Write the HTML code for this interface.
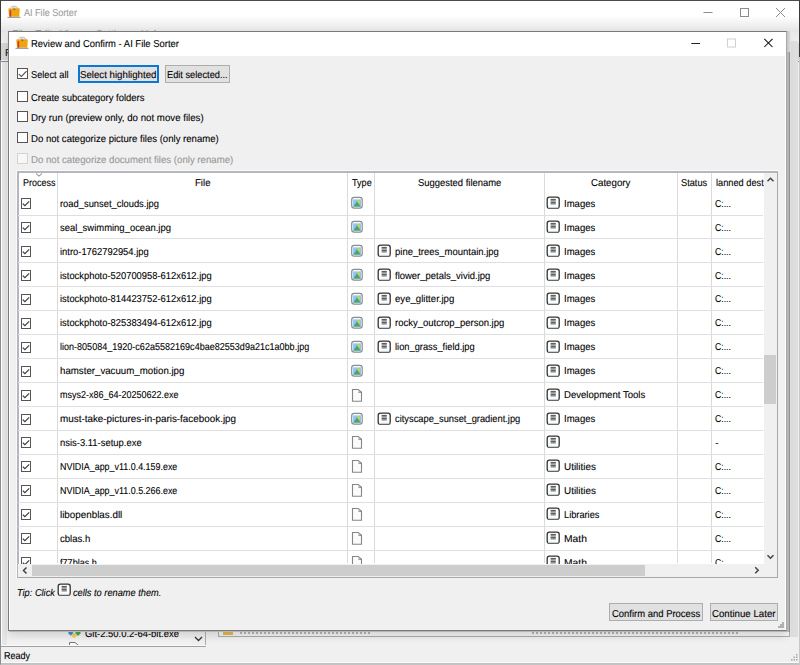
<!DOCTYPE html><html><head><meta charset="utf-8"><style>
*{box-sizing:border-box;margin:0;padding:0}
html,body{width:800px;height:665px;overflow:hidden;background:#f0f0f0}
body{position:relative;font-family:'Liberation Sans',sans-serif;font-size:10px;text-rendering:geometricPrecision;color:#000}
.a{position:absolute}
.t{position:absolute;white-space:nowrap;line-height:12px;transform-origin:0 0;-webkit-text-stroke-width:0.1px}
</style></head><body>
<div class="a" style="left:0;top:0;width:800px;height:665px;background:#f0f0f0"></div>
<div class="a" style="left:1px;top:1px;width:798px;height:30px;background:#fff"></div>
<div class="a" style="left:1px;top:16px;width:798px;height:16px;background:linear-gradient(#fff,#e4e4e4)"></div>
<div class="a" style="left:1px;top:32px;width:798px;height:11px;background:linear-gradient(#e8e8e8,#f0f0f0)"></div>
<div class="a" style="left:1px;top:43px;width:798px;height:17px;background:#d6d6d6"></div>
<div class="a" style="left:1px;top:60px;width:798px;height:1px;background:#f4f4f4"></div>
<div class="a" style="left:1px;top:61px;width:798px;height:1px;background:#8a8a8a"></div>
<div class="t" style="left:5px;top:48px;color:#111">F</div>
<div class="t" style="left:12px;top:29px;color:#9a9a9a">File</div>
<div class="t" style="left:35px;top:29px;color:#9a9a9a">Edit</div>
<div class="t" style="left:60px;top:29px;color:#9a9a9a">View</div>
<div class="t" style="left:96px;top:29px;color:#9a9a9a">Settings</div>
<div class="t" style="left:141px;top:29px;color:#9a9a9a">Help</div>
<div class="a" style="left:1px;top:62px;width:205px;height:585px;background:linear-gradient(90deg,#fff 0 1px,#e6e6e6 1px 6px,#f2f2f2 6px);border-right:1px solid #adadad"></div>
<div class="a" style="left:192px;top:631px;width:13px;height:15px;background:#f0f0f0"></div>
<svg class="a" style="left:194px;top:636px" width="9" height="6"><path d="M1 1 L4.5 4.5 L8 1" fill="none" stroke="#333" stroke-width="1.3"/></svg>
<svg class="a" style="left:67px;top:628px" width="16" height="12"><path d="M1 5 L3.75 2.25 L6.5 5 L3.75 7.75 Z" fill="#4a8ad8"/><path d="M8 5 L11 2 L14 5 L11 8 Z" fill="#4aa848"/><path d="M4 7.5 L7 4.5 L10 7.5 L7 10.5 Z" fill="#f2d268"/></svg>
<svg class="a" style="left:68px;top:641px" width="12" height="6"><path d="M1.5 6 V1.5 H7 L10.5 4.5 V6" fill="#fafafa" stroke="#777" stroke-width="1"/></svg>
<div class="a" style="left:1px;top:645px;width:205px;height:1px;background:#fafafa"></div>
<div class="a" style="left:1px;top:646px;width:205px;height:1px;background:#a0a0a0"></div>
<div class="a" style="left:218px;top:62px;width:572px;height:575px;background:#fff;border:1px solid #adadad"></div>
<div class="a" style="left:219px;top:630px;width:570px;height:6px;background:#f4f4f4"></div>
<div class="a" style="left:223px;top:631px;width:10px;height:4px;background:#e8b84a"></div>
<div class="a" style="left:240px;top:631px;width:132px;height:3px;background:repeating-linear-gradient(90deg,#b4b4b4 0 2px,transparent 2px 4px)"></div>
<div class="a" style="left:532px;top:631px;width:206px;height:3px;background:repeating-linear-gradient(90deg,#b4b4b4 0 2px,transparent 2px 4px)"></div>
<div class="a" style="left:790px;top:41px;width:8px;height:596px;background:#dedede;border-left:1px solid #e8e8e8"></div>
<div class="a" style="left:1px;top:647px;width:798px;height:17px;background:#f0f0f0"></div>
<svg class="a" style="left:790px;top:653px" width="9" height="9"><g fill="#a8a8a8"><rect x="6" y="1" width="1.5" height="1.5"/><rect x="3.5" y="3.5" width="1.5" height="1.5"/><rect x="6" y="3.5" width="1.5" height="1.5"/><rect x="1" y="6" width="1.5" height="1.5"/><rect x="3.5" y="6" width="1.5" height="1.5"/><rect x="6" y="6" width="1.5" height="1.5"/></g></svg>
<div class="a" style="left:1px;top:662px;width:798px;height:1px;background:#fafafa"></div>
<div class="a" style="left:1px;top:663px;width:798px;height:2px;background:#c2c2c2"></div>
<div class="a" style="left:0;top:0;width:800px;height:665px;border:1px solid #8a8e94;border-top-color:#4a4a4a;border-bottom-color:#c4c4c4;border-right-color:#c8c8c8"></div>
<div class="a" style="left:0;top:0;width:1px;height:60px;background:#3a3a3a"></div>
<div class="a" style="left:799px;top:0;width:1px;height:57px;background:#3a3a3a"></div>
<svg class="a" style="left:7px;top:5px" width="14" height="14" viewBox="0 0 14 14"><path d="M2.5 4.5 L5 1.2 L9.5 1.8 L11 4.5 Z" fill="#f2f2f2" stroke="#a8a8a8" stroke-width=".7"/><path d="M5.5 3.5 L8.5 0.8 L11.5 3.8 Z" fill="#e6e6e6" stroke="#b0b0b0" stroke-width=".6"/><path d="M1.3 3.6 H12.8 L12.3 11.8 H2 Z" fill="#f0a410"/><path d="M6.5 3.6 H8.2 V5 H6.5 Z" fill="#8a6a20"/><rect x="2.6" y="5.2" width="1.6" height="6.6" fill="#c8363a"/><rect x="0.5" y="11.8" width="13" height="1.2" fill="#a0a4aa"/></svg>
<svg class="a" style="left:700px;top:5px" width="90" height="16"><path d="M3.5 7.5 H12.5" stroke="#8c8c8c" stroke-width="1"/><rect x="40.5" y="3.5" width="8" height="8" fill="none" stroke="#8c8c8c"/><path d="M76 3 L85 12 M85 3 L76 12" stroke="#8c8c8c" stroke-width="1"/></svg>
<div class="t" style="left:24.20px;top:8px;transform:scaleX(0.9065);color:#9c9c9c">AI File Sorter</div>
<div class="t" style="left:4.30px;top:651px;transform:scaleX(0.9029);">Ready</div>
<div class="t" style="left:85.40px;top:629px;transform:scaleX(0.9437);">Git-2.50.0.2-64-bit.exe</div>
<div class="a" style="left:8px;top:31px;width:779px;height:600px;border:1px solid #7a7a7a;border-right-color:#a8a8a8;background:#f0f0f0;box-shadow:1px 1px 0 #b5b5b5,2px 1px 0 #b5b5b5,3px 1px 0 #909090,0 5px 8px rgba(0,0,0,.13)"></div>
<div class="a" style="left:9px;top:56px;width:1px;height:574px;background:#fff"></div>
<div class="a" style="left:785px;top:56px;width:1px;height:574px;background:#fff"></div>
<div class="a" style="left:787px;top:31px;width:3px;height:21px;background:linear-gradient(90deg,#c4c4c4,#d8d8d8)"></div>
<div class="a" style="left:9px;top:32px;width:777px;height:24px;background:#fff"></div>
<svg class="a" style="left:15px;top:36px" width="14" height="14" viewBox="0 0 14 14"><path d="M2.5 4.5 L5 1.2 L9.5 1.8 L11 4.5 Z" fill="#f2f2f2" stroke="#a8a8a8" stroke-width=".7"/><path d="M5.5 3.5 L8.5 0.8 L11.5 3.8 Z" fill="#e6e6e6" stroke="#b0b0b0" stroke-width=".6"/><path d="M1.3 3.6 H12.8 L12.3 11.8 H2 Z" fill="#f0a410"/><path d="M6.5 3.6 H8.2 V5 H6.5 Z" fill="#8a6a20"/><rect x="2.6" y="5.2" width="1.6" height="6.6" fill="#c8363a"/><rect x="0.5" y="11.8" width="13" height="1.2" fill="#a0a4aa"/></svg>
<svg class="a" style="left:688px;top:36px" width="92" height="16"><path d="M3.3 7.5 H12" stroke="#222" stroke-width="1"/><rect x="39.5" y="3" width="8" height="8" fill="none" stroke="#d0d0d0"/><path d="M76.3 2.8 L84.5 11 M84.5 2.8 L76.3 11" stroke="#111" stroke-width="1.05"/></svg>
<div class="a" style="left:17px;top:68px;width:11px;height:11px;border:1px solid #555;background:#fff"><svg style="position:absolute;left:0;top:0" width="9" height="9"><path d="M0.8 5.2 L3.4 7.5 L8.6 2.2" fill="none" stroke="#505050" stroke-width="1.1"/></svg></div>
<div class="a" style="left:78px;top:65px;width:81px;height:18px;border:2px solid #0a78d4;background:#e1e1e1"></div>
<div class="a" style="left:165px;top:65px;width:65px;height:18px;border:1px solid #adadad;background:#e1e1e1"></div>
<div class="a" style="left:17px;top:91px;width:11px;height:11px;border:1px solid #555;background:#fff"></div>
<div class="a" style="left:17px;top:111px;width:11px;height:11px;border:1px solid #555;background:#fff"></div>
<div class="a" style="left:17px;top:132px;width:11px;height:11px;border:1px solid #555;background:#fff"></div>
<div class="a" style="left:17px;top:153px;width:11px;height:11px;border:1px solid #d2d2d2;background:#f7f7f7"></div>
<div class="t" style="left:31.40px;top:39px;transform:scaleX(0.9437);">Review and Confirm - AI File Sorter</div>
<div class="t" style="left:31.40px;top:70px;transform:scaleX(0.9241);">Select all</div>
<div class="t" style="left:80.40px;top:70px;transform:scaleX(0.9677);">Select highlighted</div>
<div class="t" style="left:166.90px;top:70px;transform:scaleX(0.9246);">Edit selected...</div>
<div class="t" style="left:31.40px;top:93px;transform:scaleX(0.9452);">Create subcategory folders</div>
<div class="t" style="left:31.40px;top:113px;transform:scaleX(0.9690);">Dry run (preview only, do not move files)</div>
<div class="t" style="left:31.40px;top:134px;transform:scaleX(0.9567);">Do not categorize picture files (only rename)</div>
<div class="t" style="left:31.40px;top:155px;transform:scaleX(0.9624);color:#979797">Do not categorize document files (only rename)</div>
<div class="a" style="left:16px;top:170px;width:763px;height:409px;border:1px solid #fafafa;border-right:none;border-bottom:none"></div>
<div class="a" style="left:17px;top:171px;width:761px;height:407px;border:1px solid #a6a8ae;border-top:2px solid #b4b7be;border-left:2px solid #b4b7be;background:#fff"></div>
<div class="a" style="left:57px;top:173px;width:1px;height:390px;background:#dadada"></div>
<div class="a" style="left:347px;top:173px;width:1px;height:390px;background:#dadada"></div>
<div class="a" style="left:374px;top:173px;width:1px;height:390px;background:#dadada"></div>
<div class="a" style="left:544px;top:173px;width:1px;height:390px;background:#dadada"></div>
<div class="a" style="left:677px;top:173px;width:1px;height:390px;background:#dadada"></div>
<div class="a" style="left:711px;top:173px;width:1px;height:390px;background:#dadada"></div>
<svg class="a" style="left:35px;top:173px" width="8" height="4"><path d="M1 .5 L4 3.2 L7 .5" fill="none" stroke="#7a7a7a" stroke-width="1"/></svg>
<div class="a" style="left:18px;top:215px;width:745px;height:1px;background:#dfdfdf"></div>
<div class="a" style="left:21px;top:198px;width:10px;height:11px;border:1px solid #555;background:#fff"><svg style="position:absolute;left:-1px;top:-1px" width="10" height="11"><path d="M1.8 5.6 L3.9 7.7 L8.2 3.4" fill="none" stroke="#3a3a3a" stroke-width="1.15"/></svg></div>
<svg class="a" style="left:350px;top:196px" width="14" height="14" viewBox="0 0 14 14"><rect x="1.7" y="1.3" width="10.5" height="10.9" rx="2.4" fill="#fbfbfb" stroke="#8c8c8c" stroke-width="1.2"/><rect x="3.1" y="3.4" width="7.9" height="7.7" fill="#86c8f6"/><path d="M3.4 10.4 L7 5.3 L10.6 10.4 Z" fill="#4aa564"/><circle cx="8.9" cy="5.8" r="1.3" fill="#f7cc10"/></svg>
<svg class="a" style="left:546px;top:196px" width="14" height="14" viewBox="0 0 14 14"><rect x="1.2" y="1.2" width="12" height="11" rx="2.2" fill="#fff" stroke="#343434" stroke-width="1.3"/><path d="M2 11.2 H12.4" stroke="#d8ecf8" stroke-width="1"/><path d="M4.6 3.4 H9.8 M4.6 4.9 H9.8 M4.6 6.4 H9.8 M4.6 7.9 H9.8" stroke="#4a4a4a" stroke-width="1"/></svg>
<div class="a" style="left:18px;top:238px;width:745px;height:1px;background:#dfdfdf"></div>
<div class="a" style="left:21px;top:222px;width:10px;height:11px;border:1px solid #555;background:#fff"><svg style="position:absolute;left:-1px;top:-1px" width="10" height="11"><path d="M1.8 5.6 L3.9 7.7 L8.2 3.4" fill="none" stroke="#3a3a3a" stroke-width="1.15"/></svg></div>
<svg class="a" style="left:350px;top:220px" width="14" height="14" viewBox="0 0 14 14"><rect x="1.7" y="1.3" width="10.5" height="10.9" rx="2.4" fill="#fbfbfb" stroke="#8c8c8c" stroke-width="1.2"/><rect x="3.1" y="3.4" width="7.9" height="7.7" fill="#86c8f6"/><path d="M3.4 10.4 L7 5.3 L10.6 10.4 Z" fill="#4aa564"/><circle cx="8.9" cy="5.8" r="1.3" fill="#f7cc10"/></svg>
<svg class="a" style="left:546px;top:220px" width="14" height="14" viewBox="0 0 14 14"><rect x="1.2" y="1.2" width="12" height="11" rx="2.2" fill="#fff" stroke="#343434" stroke-width="1.3"/><path d="M2 11.2 H12.4" stroke="#d8ecf8" stroke-width="1"/><path d="M4.6 3.4 H9.8 M4.6 4.9 H9.8 M4.6 6.4 H9.8 M4.6 7.9 H9.8" stroke="#4a4a4a" stroke-width="1"/></svg>
<div class="a" style="left:18px;top:262px;width:745px;height:1px;background:#dfdfdf"></div>
<div class="a" style="left:21px;top:246px;width:10px;height:11px;border:1px solid #555;background:#fff"><svg style="position:absolute;left:-1px;top:-1px" width="10" height="11"><path d="M1.8 5.6 L3.9 7.7 L8.2 3.4" fill="none" stroke="#3a3a3a" stroke-width="1.15"/></svg></div>
<svg class="a" style="left:350px;top:244px" width="14" height="14" viewBox="0 0 14 14"><rect x="1.7" y="1.3" width="10.5" height="10.9" rx="2.4" fill="#fbfbfb" stroke="#8c8c8c" stroke-width="1.2"/><rect x="3.1" y="3.4" width="7.9" height="7.7" fill="#86c8f6"/><path d="M3.4 10.4 L7 5.3 L10.6 10.4 Z" fill="#4aa564"/><circle cx="8.9" cy="5.8" r="1.3" fill="#f7cc10"/></svg>
<svg class="a" style="left:377px;top:244px" width="14" height="14" viewBox="0 0 14 14"><rect x="1.2" y="1.2" width="12" height="11" rx="2.2" fill="#fff" stroke="#343434" stroke-width="1.3"/><path d="M2 11.2 H12.4" stroke="#d8ecf8" stroke-width="1"/><path d="M4.6 3.4 H9.8 M4.6 4.9 H9.8 M4.6 6.4 H9.8 M4.6 7.9 H9.8" stroke="#4a4a4a" stroke-width="1"/></svg>
<svg class="a" style="left:546px;top:244px" width="14" height="14" viewBox="0 0 14 14"><rect x="1.2" y="1.2" width="12" height="11" rx="2.2" fill="#fff" stroke="#343434" stroke-width="1.3"/><path d="M2 11.2 H12.4" stroke="#d8ecf8" stroke-width="1"/><path d="M4.6 3.4 H9.8 M4.6 4.9 H9.8 M4.6 6.4 H9.8 M4.6 7.9 H9.8" stroke="#4a4a4a" stroke-width="1"/></svg>
<div class="a" style="left:18px;top:286px;width:745px;height:1px;background:#dfdfdf"></div>
<div class="a" style="left:21px;top:270px;width:10px;height:11px;border:1px solid #555;background:#fff"><svg style="position:absolute;left:-1px;top:-1px" width="10" height="11"><path d="M1.8 5.6 L3.9 7.7 L8.2 3.4" fill="none" stroke="#3a3a3a" stroke-width="1.15"/></svg></div>
<svg class="a" style="left:350px;top:268px" width="14" height="14" viewBox="0 0 14 14"><rect x="1.7" y="1.3" width="10.5" height="10.9" rx="2.4" fill="#fbfbfb" stroke="#8c8c8c" stroke-width="1.2"/><rect x="3.1" y="3.4" width="7.9" height="7.7" fill="#86c8f6"/><path d="M3.4 10.4 L7 5.3 L10.6 10.4 Z" fill="#4aa564"/><circle cx="8.9" cy="5.8" r="1.3" fill="#f7cc10"/></svg>
<svg class="a" style="left:377px;top:268px" width="14" height="14" viewBox="0 0 14 14"><rect x="1.2" y="1.2" width="12" height="11" rx="2.2" fill="#fff" stroke="#343434" stroke-width="1.3"/><path d="M2 11.2 H12.4" stroke="#d8ecf8" stroke-width="1"/><path d="M4.6 3.4 H9.8 M4.6 4.9 H9.8 M4.6 6.4 H9.8 M4.6 7.9 H9.8" stroke="#4a4a4a" stroke-width="1"/></svg>
<svg class="a" style="left:546px;top:268px" width="14" height="14" viewBox="0 0 14 14"><rect x="1.2" y="1.2" width="12" height="11" rx="2.2" fill="#fff" stroke="#343434" stroke-width="1.3"/><path d="M2 11.2 H12.4" stroke="#d8ecf8" stroke-width="1"/><path d="M4.6 3.4 H9.8 M4.6 4.9 H9.8 M4.6 6.4 H9.8 M4.6 7.9 H9.8" stroke="#4a4a4a" stroke-width="1"/></svg>
<div class="a" style="left:18px;top:310px;width:745px;height:1px;background:#dfdfdf"></div>
<div class="a" style="left:21px;top:294px;width:10px;height:11px;border:1px solid #555;background:#fff"><svg style="position:absolute;left:-1px;top:-1px" width="10" height="11"><path d="M1.8 5.6 L3.9 7.7 L8.2 3.4" fill="none" stroke="#3a3a3a" stroke-width="1.15"/></svg></div>
<svg class="a" style="left:350px;top:292px" width="14" height="14" viewBox="0 0 14 14"><rect x="1.7" y="1.3" width="10.5" height="10.9" rx="2.4" fill="#fbfbfb" stroke="#8c8c8c" stroke-width="1.2"/><rect x="3.1" y="3.4" width="7.9" height="7.7" fill="#86c8f6"/><path d="M3.4 10.4 L7 5.3 L10.6 10.4 Z" fill="#4aa564"/><circle cx="8.9" cy="5.8" r="1.3" fill="#f7cc10"/></svg>
<svg class="a" style="left:377px;top:292px" width="14" height="14" viewBox="0 0 14 14"><rect x="1.2" y="1.2" width="12" height="11" rx="2.2" fill="#fff" stroke="#343434" stroke-width="1.3"/><path d="M2 11.2 H12.4" stroke="#d8ecf8" stroke-width="1"/><path d="M4.6 3.4 H9.8 M4.6 4.9 H9.8 M4.6 6.4 H9.8 M4.6 7.9 H9.8" stroke="#4a4a4a" stroke-width="1"/></svg>
<svg class="a" style="left:546px;top:292px" width="14" height="14" viewBox="0 0 14 14"><rect x="1.2" y="1.2" width="12" height="11" rx="2.2" fill="#fff" stroke="#343434" stroke-width="1.3"/><path d="M2 11.2 H12.4" stroke="#d8ecf8" stroke-width="1"/><path d="M4.6 3.4 H9.8 M4.6 4.9 H9.8 M4.6 6.4 H9.8 M4.6 7.9 H9.8" stroke="#4a4a4a" stroke-width="1"/></svg>
<div class="a" style="left:18px;top:334px;width:745px;height:1px;background:#dfdfdf"></div>
<div class="a" style="left:21px;top:318px;width:10px;height:11px;border:1px solid #555;background:#fff"><svg style="position:absolute;left:-1px;top:-1px" width="10" height="11"><path d="M1.8 5.6 L3.9 7.7 L8.2 3.4" fill="none" stroke="#3a3a3a" stroke-width="1.15"/></svg></div>
<svg class="a" style="left:350px;top:316px" width="14" height="14" viewBox="0 0 14 14"><rect x="1.7" y="1.3" width="10.5" height="10.9" rx="2.4" fill="#fbfbfb" stroke="#8c8c8c" stroke-width="1.2"/><rect x="3.1" y="3.4" width="7.9" height="7.7" fill="#86c8f6"/><path d="M3.4 10.4 L7 5.3 L10.6 10.4 Z" fill="#4aa564"/><circle cx="8.9" cy="5.8" r="1.3" fill="#f7cc10"/></svg>
<svg class="a" style="left:377px;top:316px" width="14" height="14" viewBox="0 0 14 14"><rect x="1.2" y="1.2" width="12" height="11" rx="2.2" fill="#fff" stroke="#343434" stroke-width="1.3"/><path d="M2 11.2 H12.4" stroke="#d8ecf8" stroke-width="1"/><path d="M4.6 3.4 H9.8 M4.6 4.9 H9.8 M4.6 6.4 H9.8 M4.6 7.9 H9.8" stroke="#4a4a4a" stroke-width="1"/></svg>
<svg class="a" style="left:546px;top:316px" width="14" height="14" viewBox="0 0 14 14"><rect x="1.2" y="1.2" width="12" height="11" rx="2.2" fill="#fff" stroke="#343434" stroke-width="1.3"/><path d="M2 11.2 H12.4" stroke="#d8ecf8" stroke-width="1"/><path d="M4.6 3.4 H9.8 M4.6 4.9 H9.8 M4.6 6.4 H9.8 M4.6 7.9 H9.8" stroke="#4a4a4a" stroke-width="1"/></svg>
<div class="a" style="left:18px;top:358px;width:745px;height:1px;background:#dfdfdf"></div>
<div class="a" style="left:21px;top:342px;width:10px;height:11px;border:1px solid #555;background:#fff"><svg style="position:absolute;left:-1px;top:-1px" width="10" height="11"><path d="M1.8 5.6 L3.9 7.7 L8.2 3.4" fill="none" stroke="#3a3a3a" stroke-width="1.15"/></svg></div>
<svg class="a" style="left:350px;top:340px" width="14" height="14" viewBox="0 0 14 14"><rect x="1.7" y="1.3" width="10.5" height="10.9" rx="2.4" fill="#fbfbfb" stroke="#8c8c8c" stroke-width="1.2"/><rect x="3.1" y="3.4" width="7.9" height="7.7" fill="#86c8f6"/><path d="M3.4 10.4 L7 5.3 L10.6 10.4 Z" fill="#4aa564"/><circle cx="8.9" cy="5.8" r="1.3" fill="#f7cc10"/></svg>
<svg class="a" style="left:377px;top:340px" width="14" height="14" viewBox="0 0 14 14"><rect x="1.2" y="1.2" width="12" height="11" rx="2.2" fill="#fff" stroke="#343434" stroke-width="1.3"/><path d="M2 11.2 H12.4" stroke="#d8ecf8" stroke-width="1"/><path d="M4.6 3.4 H9.8 M4.6 4.9 H9.8 M4.6 6.4 H9.8 M4.6 7.9 H9.8" stroke="#4a4a4a" stroke-width="1"/></svg>
<svg class="a" style="left:546px;top:340px" width="14" height="14" viewBox="0 0 14 14"><rect x="1.2" y="1.2" width="12" height="11" rx="2.2" fill="#fff" stroke="#343434" stroke-width="1.3"/><path d="M2 11.2 H12.4" stroke="#d8ecf8" stroke-width="1"/><path d="M4.6 3.4 H9.8 M4.6 4.9 H9.8 M4.6 6.4 H9.8 M4.6 7.9 H9.8" stroke="#4a4a4a" stroke-width="1"/></svg>
<div class="a" style="left:18px;top:382px;width:745px;height:1px;background:#dfdfdf"></div>
<div class="a" style="left:21px;top:366px;width:10px;height:11px;border:1px solid #555;background:#fff"><svg style="position:absolute;left:-1px;top:-1px" width="10" height="11"><path d="M1.8 5.6 L3.9 7.7 L8.2 3.4" fill="none" stroke="#3a3a3a" stroke-width="1.15"/></svg></div>
<svg class="a" style="left:350px;top:364px" width="14" height="14" viewBox="0 0 14 14"><rect x="1.7" y="1.3" width="10.5" height="10.9" rx="2.4" fill="#fbfbfb" stroke="#8c8c8c" stroke-width="1.2"/><rect x="3.1" y="3.4" width="7.9" height="7.7" fill="#86c8f6"/><path d="M3.4 10.4 L7 5.3 L10.6 10.4 Z" fill="#4aa564"/><circle cx="8.9" cy="5.8" r="1.3" fill="#f7cc10"/></svg>
<svg class="a" style="left:546px;top:364px" width="14" height="14" viewBox="0 0 14 14"><rect x="1.2" y="1.2" width="12" height="11" rx="2.2" fill="#fff" stroke="#343434" stroke-width="1.3"/><path d="M2 11.2 H12.4" stroke="#d8ecf8" stroke-width="1"/><path d="M4.6 3.4 H9.8 M4.6 4.9 H9.8 M4.6 6.4 H9.8 M4.6 7.9 H9.8" stroke="#4a4a4a" stroke-width="1"/></svg>
<div class="a" style="left:18px;top:406px;width:745px;height:1px;background:#dfdfdf"></div>
<div class="a" style="left:21px;top:390px;width:10px;height:11px;border:1px solid #555;background:#fff"><svg style="position:absolute;left:-1px;top:-1px" width="10" height="11"><path d="M1.8 5.6 L3.9 7.7 L8.2 3.4" fill="none" stroke="#3a3a3a" stroke-width="1.15"/></svg></div>
<svg class="a" style="left:351px;top:388px" width="12" height="15" viewBox="0 0 12 15"><path d="M1.5 1.5 H7.2 L10.5 4.3 V13.2 H1.5 Z" fill="#fafbfc" stroke="#868686" stroke-width="1.1"/><path d="M7.3 4.2 H10.4" stroke="#777" stroke-width="1"/></svg>
<svg class="a" style="left:546px;top:388px" width="14" height="14" viewBox="0 0 14 14"><rect x="1.2" y="1.2" width="12" height="11" rx="2.2" fill="#fff" stroke="#343434" stroke-width="1.3"/><path d="M2 11.2 H12.4" stroke="#d8ecf8" stroke-width="1"/><path d="M4.6 3.4 H9.8 M4.6 4.9 H9.8 M4.6 6.4 H9.8 M4.6 7.9 H9.8" stroke="#4a4a4a" stroke-width="1"/></svg>
<div class="a" style="left:18px;top:430px;width:745px;height:1px;background:#dfdfdf"></div>
<div class="a" style="left:21px;top:414px;width:10px;height:11px;border:1px solid #555;background:#fff"><svg style="position:absolute;left:-1px;top:-1px" width="10" height="11"><path d="M1.8 5.6 L3.9 7.7 L8.2 3.4" fill="none" stroke="#3a3a3a" stroke-width="1.15"/></svg></div>
<svg class="a" style="left:350px;top:412px" width="14" height="14" viewBox="0 0 14 14"><rect x="1.7" y="1.3" width="10.5" height="10.9" rx="2.4" fill="#fbfbfb" stroke="#8c8c8c" stroke-width="1.2"/><rect x="3.1" y="3.4" width="7.9" height="7.7" fill="#86c8f6"/><path d="M3.4 10.4 L7 5.3 L10.6 10.4 Z" fill="#4aa564"/><circle cx="8.9" cy="5.8" r="1.3" fill="#f7cc10"/></svg>
<svg class="a" style="left:377px;top:412px" width="14" height="14" viewBox="0 0 14 14"><rect x="1.2" y="1.2" width="12" height="11" rx="2.2" fill="#fff" stroke="#343434" stroke-width="1.3"/><path d="M2 11.2 H12.4" stroke="#d8ecf8" stroke-width="1"/><path d="M4.6 3.4 H9.8 M4.6 4.9 H9.8 M4.6 6.4 H9.8 M4.6 7.9 H9.8" stroke="#4a4a4a" stroke-width="1"/></svg>
<svg class="a" style="left:546px;top:412px" width="14" height="14" viewBox="0 0 14 14"><rect x="1.2" y="1.2" width="12" height="11" rx="2.2" fill="#fff" stroke="#343434" stroke-width="1.3"/><path d="M2 11.2 H12.4" stroke="#d8ecf8" stroke-width="1"/><path d="M4.6 3.4 H9.8 M4.6 4.9 H9.8 M4.6 6.4 H9.8 M4.6 7.9 H9.8" stroke="#4a4a4a" stroke-width="1"/></svg>
<div class="a" style="left:18px;top:454px;width:745px;height:1px;background:#dfdfdf"></div>
<div class="a" style="left:21px;top:437px;width:10px;height:11px;border:1px solid #555;background:#fff"><svg style="position:absolute;left:-1px;top:-1px" width="10" height="11"><path d="M1.8 5.6 L3.9 7.7 L8.2 3.4" fill="none" stroke="#3a3a3a" stroke-width="1.15"/></svg></div>
<svg class="a" style="left:351px;top:435px" width="12" height="15" viewBox="0 0 12 15"><path d="M1.5 1.5 H7.2 L10.5 4.3 V13.2 H1.5 Z" fill="#fafbfc" stroke="#868686" stroke-width="1.1"/><path d="M7.3 4.2 H10.4" stroke="#777" stroke-width="1"/></svg>
<svg class="a" style="left:546px;top:435px" width="14" height="14" viewBox="0 0 14 14"><rect x="1.2" y="1.2" width="12" height="11" rx="2.2" fill="#fff" stroke="#343434" stroke-width="1.3"/><path d="M2 11.2 H12.4" stroke="#d8ecf8" stroke-width="1"/><path d="M4.6 3.4 H9.8 M4.6 4.9 H9.8 M4.6 6.4 H9.8 M4.6 7.9 H9.8" stroke="#4a4a4a" stroke-width="1"/></svg>
<div class="a" style="left:18px;top:478px;width:745px;height:1px;background:#dfdfdf"></div>
<div class="a" style="left:21px;top:461px;width:10px;height:11px;border:1px solid #555;background:#fff"><svg style="position:absolute;left:-1px;top:-1px" width="10" height="11"><path d="M1.8 5.6 L3.9 7.7 L8.2 3.4" fill="none" stroke="#3a3a3a" stroke-width="1.15"/></svg></div>
<svg class="a" style="left:351px;top:459px" width="12" height="15" viewBox="0 0 12 15"><path d="M1.5 1.5 H7.2 L10.5 4.3 V13.2 H1.5 Z" fill="#fafbfc" stroke="#868686" stroke-width="1.1"/><path d="M7.3 4.2 H10.4" stroke="#777" stroke-width="1"/></svg>
<svg class="a" style="left:546px;top:459px" width="14" height="14" viewBox="0 0 14 14"><rect x="1.2" y="1.2" width="12" height="11" rx="2.2" fill="#fff" stroke="#343434" stroke-width="1.3"/><path d="M2 11.2 H12.4" stroke="#d8ecf8" stroke-width="1"/><path d="M4.6 3.4 H9.8 M4.6 4.9 H9.8 M4.6 6.4 H9.8 M4.6 7.9 H9.8" stroke="#4a4a4a" stroke-width="1"/></svg>
<div class="a" style="left:18px;top:502px;width:745px;height:1px;background:#dfdfdf"></div>
<div class="a" style="left:21px;top:485px;width:10px;height:11px;border:1px solid #555;background:#fff"><svg style="position:absolute;left:-1px;top:-1px" width="10" height="11"><path d="M1.8 5.6 L3.9 7.7 L8.2 3.4" fill="none" stroke="#3a3a3a" stroke-width="1.15"/></svg></div>
<svg class="a" style="left:351px;top:483px" width="12" height="15" viewBox="0 0 12 15"><path d="M1.5 1.5 H7.2 L10.5 4.3 V13.2 H1.5 Z" fill="#fafbfc" stroke="#868686" stroke-width="1.1"/><path d="M7.3 4.2 H10.4" stroke="#777" stroke-width="1"/></svg>
<svg class="a" style="left:546px;top:483px" width="14" height="14" viewBox="0 0 14 14"><rect x="1.2" y="1.2" width="12" height="11" rx="2.2" fill="#fff" stroke="#343434" stroke-width="1.3"/><path d="M2 11.2 H12.4" stroke="#d8ecf8" stroke-width="1"/><path d="M4.6 3.4 H9.8 M4.6 4.9 H9.8 M4.6 6.4 H9.8 M4.6 7.9 H9.8" stroke="#4a4a4a" stroke-width="1"/></svg>
<div class="a" style="left:18px;top:526px;width:745px;height:1px;background:#dfdfdf"></div>
<div class="a" style="left:21px;top:509px;width:10px;height:11px;border:1px solid #555;background:#fff"><svg style="position:absolute;left:-1px;top:-1px" width="10" height="11"><path d="M1.8 5.6 L3.9 7.7 L8.2 3.4" fill="none" stroke="#3a3a3a" stroke-width="1.15"/></svg></div>
<svg class="a" style="left:351px;top:507px" width="12" height="15" viewBox="0 0 12 15"><path d="M1.5 1.5 H7.2 L10.5 4.3 V13.2 H1.5 Z" fill="#fafbfc" stroke="#868686" stroke-width="1.1"/><path d="M7.3 4.2 H10.4" stroke="#777" stroke-width="1"/></svg>
<svg class="a" style="left:546px;top:507px" width="14" height="14" viewBox="0 0 14 14"><rect x="1.2" y="1.2" width="12" height="11" rx="2.2" fill="#fff" stroke="#343434" stroke-width="1.3"/><path d="M2 11.2 H12.4" stroke="#d8ecf8" stroke-width="1"/><path d="M4.6 3.4 H9.8 M4.6 4.9 H9.8 M4.6 6.4 H9.8 M4.6 7.9 H9.8" stroke="#4a4a4a" stroke-width="1"/></svg>
<div class="a" style="left:18px;top:550px;width:745px;height:1px;background:#dfdfdf"></div>
<div class="a" style="left:21px;top:533px;width:10px;height:11px;border:1px solid #555;background:#fff"><svg style="position:absolute;left:-1px;top:-1px" width="10" height="11"><path d="M1.8 5.6 L3.9 7.7 L8.2 3.4" fill="none" stroke="#3a3a3a" stroke-width="1.15"/></svg></div>
<svg class="a" style="left:351px;top:531px" width="12" height="15" viewBox="0 0 12 15"><path d="M1.5 1.5 H7.2 L10.5 4.3 V13.2 H1.5 Z" fill="#fafbfc" stroke="#868686" stroke-width="1.1"/><path d="M7.3 4.2 H10.4" stroke="#777" stroke-width="1"/></svg>
<svg class="a" style="left:546px;top:531px" width="14" height="14" viewBox="0 0 14 14"><rect x="1.2" y="1.2" width="12" height="11" rx="2.2" fill="#fff" stroke="#343434" stroke-width="1.3"/><path d="M2 11.2 H12.4" stroke="#d8ecf8" stroke-width="1"/><path d="M4.6 3.4 H9.8 M4.6 4.9 H9.8 M4.6 6.4 H9.8 M4.6 7.9 H9.8" stroke="#4a4a4a" stroke-width="1"/></svg>
<div class="a" style="left:21px;top:557px;width:10px;height:11px;border:1px solid #555;background:#fff"><svg style="position:absolute;left:-1px;top:-1px" width="10" height="11"><path d="M1.8 5.6 L3.9 7.7 L8.2 3.4" fill="none" stroke="#3a3a3a" stroke-width="1.15"/></svg></div>
<svg class="a" style="left:351px;top:555px" width="12" height="15" viewBox="0 0 12 15"><path d="M1.5 1.5 H7.2 L10.5 4.3 V13.2 H1.5 Z" fill="#fafbfc" stroke="#868686" stroke-width="1.1"/><path d="M7.3 4.2 H10.4" stroke="#777" stroke-width="1"/></svg>
<svg class="a" style="left:546px;top:555px" width="14" height="14" viewBox="0 0 14 14"><rect x="1.2" y="1.2" width="12" height="11" rx="2.2" fill="#fff" stroke="#343434" stroke-width="1.3"/><path d="M2 11.2 H12.4" stroke="#d8ecf8" stroke-width="1"/><path d="M4.6 3.4 H9.8 M4.6 4.9 H9.8 M4.6 6.4 H9.8 M4.6 7.9 H9.8" stroke="#4a4a4a" stroke-width="1"/></svg>
<div class="t" style="left:22.60px;top:178px;transform:scaleX(0.8969);">Process</div>
<div class="t" style="left:195.15px;top:178px;transform:scaleX(0.9612);">File</div>
<div class="t" style="left:352.00px;top:178px;transform:scaleX(0.9084);">Type</div>
<div class="t" style="left:418.40px;top:178px;transform:scaleX(0.9422);">Suggested filename</div>
<div class="t" style="left:591.00px;top:178px;transform:scaleX(0.9710);">Category</div>
<div class="t" style="left:681.20px;top:178px;transform:scaleX(0.9239);">Status</div>
<div class="t" style="left:60.00px;top:199px;transform:scaleX(0.9362);">road_sunset_clouds.jpg</div>
<div class="t" style="left:564.00px;top:199px;transform:scaleX(0.9544);">Images</div>
<div class="t" style="left:715.20px;top:199px;transform:scaleX(0.8668);">C:...</div>
<div class="t" style="left:60.00px;top:223px;transform:scaleX(0.9455);">seal_swimming_ocean.jpg</div>
<div class="t" style="left:564.00px;top:223px;transform:scaleX(0.9544);">Images</div>
<div class="t" style="left:715.20px;top:223px;transform:scaleX(0.8668);">C:...</div>
<div class="t" style="left:60.00px;top:247px;transform:scaleX(0.9383);">intro-1762792954.jpg</div>
<div class="t" style="left:395.00px;top:247px;transform:scaleX(0.9486);">pine_trees_mountain.jpg</div>
<div class="t" style="left:564.00px;top:247px;transform:scaleX(0.9544);">Images</div>
<div class="t" style="left:715.20px;top:247px;transform:scaleX(0.8668);">C:...</div>
<div class="t" style="left:60.00px;top:271px;transform:scaleX(0.9376);">istockphoto-520700958-612x612.jpg</div>
<div class="t" style="left:395.00px;top:271px;transform:scaleX(0.9471);">flower_petals_vivid.jpg</div>
<div class="t" style="left:564.00px;top:271px;transform:scaleX(0.9544);">Images</div>
<div class="t" style="left:715.20px;top:271px;transform:scaleX(0.8668);">C:...</div>
<div class="t" style="left:60.00px;top:294px;transform:scaleX(0.9376);">istockphoto-814423752-612x612.jpg</div>
<div class="t" style="left:395.00px;top:294px;transform:scaleX(0.9608);">eye_glitter.jpg</div>
<div class="t" style="left:564.00px;top:294px;transform:scaleX(0.9544);">Images</div>
<div class="t" style="left:715.20px;top:294px;transform:scaleX(0.8668);">C:...</div>
<div class="t" style="left:60.00px;top:318px;transform:scaleX(0.9376);">istockphoto-825383494-612x612.jpg</div>
<div class="t" style="left:395.00px;top:318px;transform:scaleX(0.9498);">rocky_outcrop_person.jpg</div>
<div class="t" style="left:564.00px;top:318px;transform:scaleX(0.9544);">Images</div>
<div class="t" style="left:715.20px;top:318px;transform:scaleX(0.8668);">C:...</div>
<div class="t" style="left:60.00px;top:342px;transform:scaleX(0.9035);">lion-805084_1920-c62a5582169c4bae82553d9a21c1a0bb.jpg</div>
<div class="t" style="left:395.00px;top:342px;transform:scaleX(0.9308);">lion_grass_field.jpg</div>
<div class="t" style="left:564.00px;top:342px;transform:scaleX(0.9544);">Images</div>
<div class="t" style="left:715.20px;top:342px;transform:scaleX(0.8668);">C:...</div>
<div class="t" style="left:60.00px;top:366px;transform:scaleX(0.9688);">hamster_vacuum_motion.jpg</div>
<div class="t" style="left:564.00px;top:366px;transform:scaleX(0.9544);">Images</div>
<div class="t" style="left:715.20px;top:366px;transform:scaleX(0.8668);">C:...</div>
<div class="t" style="left:60.00px;top:390px;transform:scaleX(0.9001);">msys2-x86_64-20250622.exe</div>
<div class="t" style="left:564.00px;top:390px;transform:scaleX(0.9579);">Development Tools</div>
<div class="t" style="left:715.20px;top:390px;transform:scaleX(0.8668);">C:...</div>
<div class="t" style="left:60.00px;top:414px;transform:scaleX(0.9871);">must-take-pictures-in-paris-facebook.jpg</div>
<div class="t" style="left:395.00px;top:414px;transform:scaleX(0.9314);">cityscape_sunset_gradient.jpg</div>
<div class="t" style="left:564.00px;top:414px;transform:scaleX(0.9544);">Images</div>
<div class="t" style="left:715.20px;top:414px;transform:scaleX(0.8668);">C:...</div>
<div class="t" style="left:60.00px;top:438px;transform:scaleX(0.9442);">nsis-3.11-setup.exe</div>
<div class="t" style="left:715.20px;top:438px;">-</div>
<div class="t" style="left:60.00px;top:462px;transform:scaleX(0.8915);">NVIDIA_app_v11.0.4.159.exe</div>
<div class="t" style="left:564.00px;top:462px;transform:scaleX(0.9896);">Utilities</div>
<div class="t" style="left:715.20px;top:462px;transform:scaleX(0.8668);">C:...</div>
<div class="t" style="left:60.00px;top:486px;transform:scaleX(0.8915);">NVIDIA_app_v11.0.5.266.exe</div>
<div class="t" style="left:564.00px;top:486px;transform:scaleX(0.9896);">Utilities</div>
<div class="t" style="left:715.20px;top:486px;transform:scaleX(0.8668);">C:...</div>
<div class="t" style="left:60.00px;top:510px;transform:scaleX(0.9828);">libopenblas.dll</div>
<div class="t" style="left:564.00px;top:510px;transform:scaleX(0.9229);">Libraries</div>
<div class="t" style="left:715.20px;top:510px;transform:scaleX(0.8668);">C:...</div>
<div class="t" style="left:60.00px;top:534px;transform:scaleX(0.9562);">cblas.h</div>
<div class="t" style="left:564.00px;top:534px;transform:scaleX(1.0299);">Math</div>
<div class="t" style="left:715.20px;top:534px;transform:scaleX(0.8668);">C:...</div>
<div class="t" style="left:60.00px;top:558px;transform:scaleX(0.9090);">f77blas.h</div>
<div class="t" style="left:564.00px;top:558px;transform:scaleX(1.0299);">Math</div>
<div class="t" style="left:715.20px;top:558px;transform:scaleX(0.8668);">C:...</div>
<div class="t" style="left:715.90px;top:178px;transform:scaleX(0.9223);">lanned dest</div>
<div class="a" style="left:764px;top:173px;width:13px;height:404px;background:#f0f0f0"></div>
<svg class="a" style="left:765px;top:175px" width="11" height="9"><path d="M2.5 6.2 L5.5 3.2 L8.5 6.2" fill="none" stroke="#444" stroke-width="1.5"/></svg>
<svg class="a" style="left:765px;top:552px" width="11" height="9"><path d="M2.5 3.2 L5.5 6.2 L8.5 3.2" fill="none" stroke="#444" stroke-width="1.5"/></svg>
<div class="a" style="left:764px;top:355px;width:12px;height:49px;background:#cdcdcd"></div>
<div class="a" style="left:18px;top:564px;width:746px;height:13px;background:#f0f0f0"></div>
<div class="a" style="left:32px;top:565px;width:613px;height:11px;background:#cdcdcd"></div>
<svg class="a" style="left:20px;top:565px" width="9" height="10"><path d="M6.5 2.5 L3.5 5.5 L6.5 8.5" fill="none" stroke="#444" stroke-width="1.5"/></svg>
<svg class="a" style="left:753px;top:565px" width="9" height="10"><path d="M2.2 2.3 L5.2 5.3 L2.2 8.3" fill="none" stroke="#444" stroke-width="1.5"/></svg>
<svg class="a" style="left:57px;top:583px" width="14" height="14" viewBox="0 0 14 14"><rect x="1.2" y="1.2" width="12" height="11" rx="2.2" fill="#fff" stroke="#343434" stroke-width="1.3"/><path d="M2 11.2 H12.4" stroke="#d8ecf8" stroke-width="1"/><path d="M4.6 3.4 H9.8 M4.6 4.9 H9.8 M4.6 6.4 H9.8 M4.6 7.9 H9.8" stroke="#4a4a4a" stroke-width="1"/></svg>
<div class="a" style="left:609px;top:603px;width:94px;height:18px;border:1px solid #adadad;background:#e1e1e1"></div>
<div class="a" style="left:710px;top:603px;width:68px;height:18px;border:1px solid #adadad;background:#e1e1e1"></div>
<svg class="a" style="left:777px;top:621px" width="8" height="8"><g fill="#b0b0b0"><rect x="5" y="1" width="2" height="2"/><rect x="3" y="3" width="2" height="2"/><rect x="5" y="3" width="2" height="2"/><rect x="1" y="5" width="2" height="2"/><rect x="3" y="5" width="2" height="2"/><rect x="5" y="5" width="2" height="2"/></g></svg>
<div class="t" style="left:17.40px;top:588px;transform:scaleX(0.9237);font-style:italic">Tip: Click</div>
<div class="t" style="left:73.40px;top:588px;transform:scaleX(0.9235);font-style:italic">cells to rename them.</div>
<div class="t" style="left:611.90px;top:609px;transform:scaleX(0.9456);">Confirm and Process</div>
<div class="t" style="left:712.40px;top:609px;transform:scaleX(0.9678);">Continue Later</div>
</body></html>
